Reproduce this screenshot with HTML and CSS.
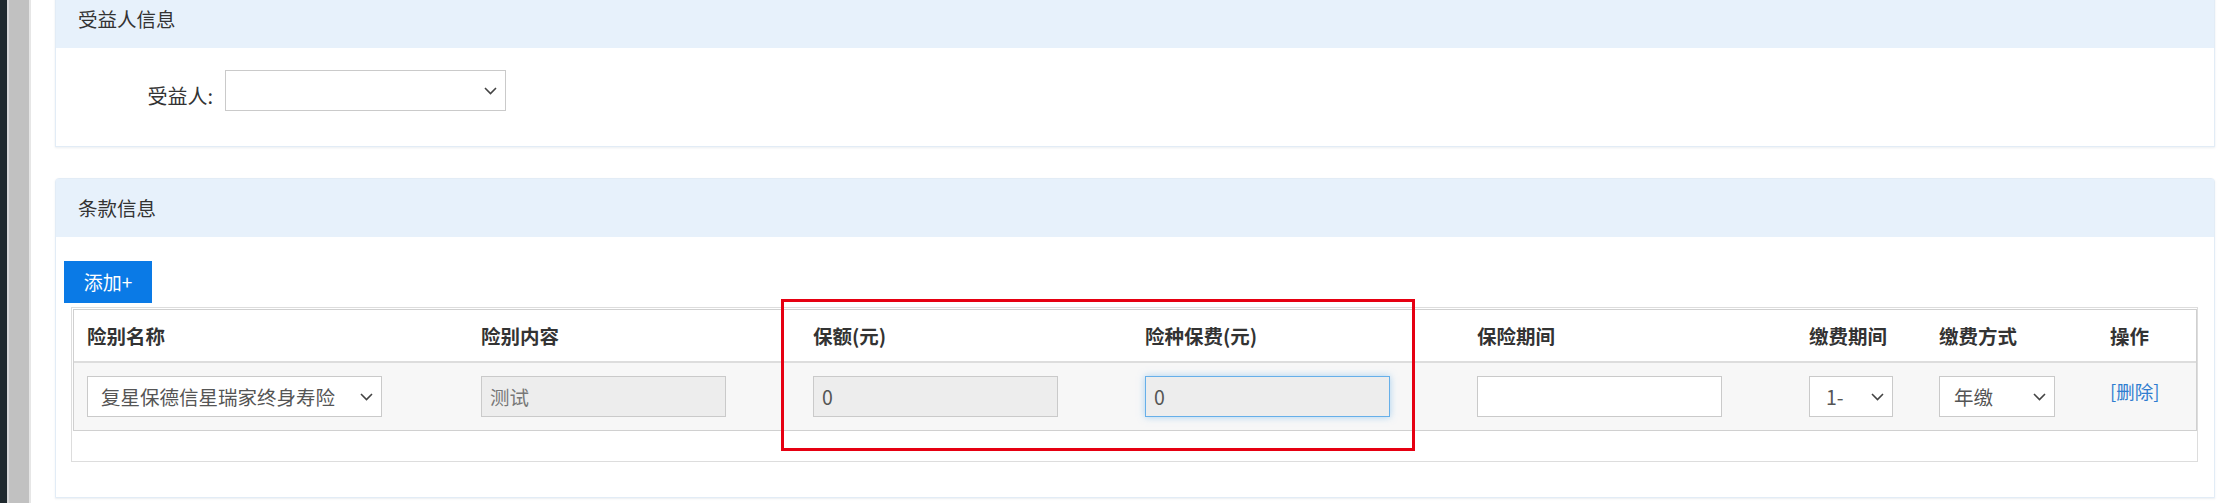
FILE: index.html
```html
<!DOCTYPE html>
<html lang="zh-CN">
<head>
<meta charset="utf-8">
<title>条款信息</title>
<link rel="stylesheet" href="styles.css">
</head>
<body>
<div class="app">
  <div class="edge">
    <div class="edge-dark"></div>
    <div class="edge-gap"></div>
    <div class="edge-gray"></div>
    <div class="edge-line"></div>
  </div>
  <div class="main">
    <section class="panel">
      <div class="panel-head">受益人信息</div>
      <div class="panel-body benef-body">
        <label class="field-label">受益人:</label>
        <div class="select select-benef">
          <span class="select-text"></span>
          <svg class="chev" viewBox="0 0 13 8"><path d="M1 1l5.5 5.5L12 1" fill="none" stroke="#444" stroke-width="1.6"/></svg>
        </div>
      </div>
    </section>

    <section class="panel panel-terms">
      <div class="panel-head">条款信息</div>
      <div class="panel-body terms-body">
        <button class="btn-add">添加+</button>
        <div class="table-box">
          <table class="terms">
            <colgroup>
              <col class="c-name"><col class="c-wide"><col class="c-wide"><col class="c-wide"><col class="c-wide"><col class="c-term"><col class="c-mode"><col>
            </colgroup>
            <thead>
              <tr>
                <th>险别名称</th>
                <th>险别内容</th>
                <th>保额(元)</th>
                <th>险种保费(元)</th>
                <th>保险期间</th>
                <th>缴费期间</th>
                <th>缴费方式</th>
                <th>操作</th>
              </tr>
            </thead>
            <tbody>
              <tr>
                <td>
                  <div class="select select-name">
                    <span class="select-text">复星保德信星瑞家终身寿险</span>
                    <svg class="chev" viewBox="0 0 13 8"><path d="M1 1l5.5 5.5L12 1" fill="none" stroke="#444" stroke-width="1.6"/></svg>
                  </div>
                </td>
                <td><div class="input readonly soft">测试</div></td>
                <td><div class="input readonly">0</div></td>
                <td><div class="input readonly focused">0</div></td>
                <td><div class="input"></div></td>
                <td>
                  <div class="select select-term">
                    <span class="select-text">1-</span>
                    <svg class="chev" viewBox="0 0 13 8"><path d="M1 1l5.5 5.5L12 1" fill="none" stroke="#444" stroke-width="1.6"/></svg>
                  </div>
                </td>
                <td>
                  <div class="select select-mode">
                    <span class="select-text">年缴</span>
                    <svg class="chev" viewBox="0 0 13 8"><path d="M1 1l5.5 5.5L12 1" fill="none" stroke="#444" stroke-width="1.6"/></svg>
                  </div>
                </td>
                <td class="op"><a class="link" href="#">[删除]</a></td>
              </tr>
            </tbody>
          </table>
        </div>
      </div>
    </section>

    <div class="highlight"></div>
  </div>
</div>
</body>
</html>
```

FILE: styles.css
```css
* { box-sizing: border-box; }

html, body {
  margin: 0;
  padding: 0;
  background: #ffffff;
}

body {
  font-family: "Noto Sans CJK SC", "Noto Sans", sans-serif;
  color: #333;
  overflow: hidden;
}

.app {
  display: flex;
  width: 2222px;
  height: 503px;
  overflow: hidden;
}

/* left edge strips */
.edge {
  display: flex;
  flex: 0 0 31px;
  height: 100%;
}
.edge-dark { width: 7px; background: #1f292e; }
.edge-gap { width: 2px; background: #d6d6d6; }
.edge-gray { width: 20px; background: #c1c1c1; }
.edge-line { width: 2px; background: #e6e6e6; }

.main {
  position: relative;
  flex: 1;
  margin-top: -11px;
  padding: 0 7px 0 24px;
}

.panel {
  background: #fff;
  border: 1px solid #e2ecf6;
  box-shadow: 0 1px 2px rgba(60, 90, 120, 0.10);
}

.panel-terms {
  margin-top: 31px;
  border-radius: 4px 4px 0 0;
}

.panel-head {
  height: 58px;
  line-height: 58px;
  padding-left: 22px;
  background: #e7f1fb;
  font-size: 19.5px;
  color: #333;
}

.benef-body {
  display: flex;
  align-items: flex-start;
  padding: 22px 0 35px 0;
}

.field-label {
  width: 157px;
  margin-right: 12px;
  margin-top: 12px;
  text-align: right;
  font-size: 20px;
  line-height: 28px;
  color: #333;
}

.select {
  display: flex;
  align-items: center;
  justify-content: space-between;
  height: 41px;
  padding: 0 8px 0 13px;
  background: #fff;
  border: 1px solid #cacaca;
  font-size: 19.5px;
  color: #555;
}

.select-text {
  white-space: nowrap;
  line-height: 28px;
}

.chev {
  width: 13px;
  height: 8px;
  flex: 0 0 13px;
}

.select-benef { width: 281px; }
.select-name { width: 295px; }
.select-term { width: 84px; padding-left: 16px; }
.select-mode { width: 116px; padding-left: 14px; }

.terms-body {
  padding: 24px 16px 35px 8px;
}

.btn-add {
  display: block;
  width: 88px;
  height: 42px;
  margin: 0 0 4px 0;
  padding: 0;
  border: none;
  background: #0a7ae6;
  color: #fff;
  font-family: inherit;
  font-size: 19px;
  line-height: 42px;
  cursor: pointer;
}

.table-box {
  margin-left: 7px;
  border: 1px solid #dddddd;
  padding: 1px 0 30px 1px;
}

.terms {
  width: 100%;
  table-layout: fixed;
  border-collapse: separate;
  border-spacing: 0;
  border: 1px solid #d0d0d0;
}

.c-name { width: 394px; }
.c-wide { width: 332px; }
.c-term { width: 130px; }
.c-mode { width: 171px; }

.terms th {
  padding: 12px 13px;
  line-height: 27px;
  text-align: left;
  font-size: 19.5px;
  font-weight: 700;
  color: #333;
  background: #fff;
  border-bottom: 2px solid #dddddd;
  white-space: nowrap;
}

.terms td {
  padding: 13px;
  background: #f7f7f7;
  vertical-align: middle;
}

.input {
  display: flex;
  align-items: center;
  width: 245px;
  height: 41px;
  padding: 0 8px;
  background: #fff;
  border: 1px solid #cacaca;
  font-size: 19.5px;
  line-height: 28px;
  color: #555;
}

.input.readonly {
  background: #ededed;
}

.input.soft {
  color: #777;
}

.input.focused {
  border-color: #66afe9;
  box-shadow: 0 0 7px rgba(102, 175, 233, 0.55);
}

.terms td.op {
  vertical-align: top;
  padding-top: 15px;
}

.link {
  font-size: 18.5px;
  line-height: 27px;
  color: #2f7dd0;
  text-decoration: none;
}

/* annotation box drawn over the table */
.highlight {
  position: absolute;
  left: 750px;
  top: 310px;
  width: 634px;
  height: 152px;
  border: 3px solid #e60012;
  pointer-events: none;
}
```
